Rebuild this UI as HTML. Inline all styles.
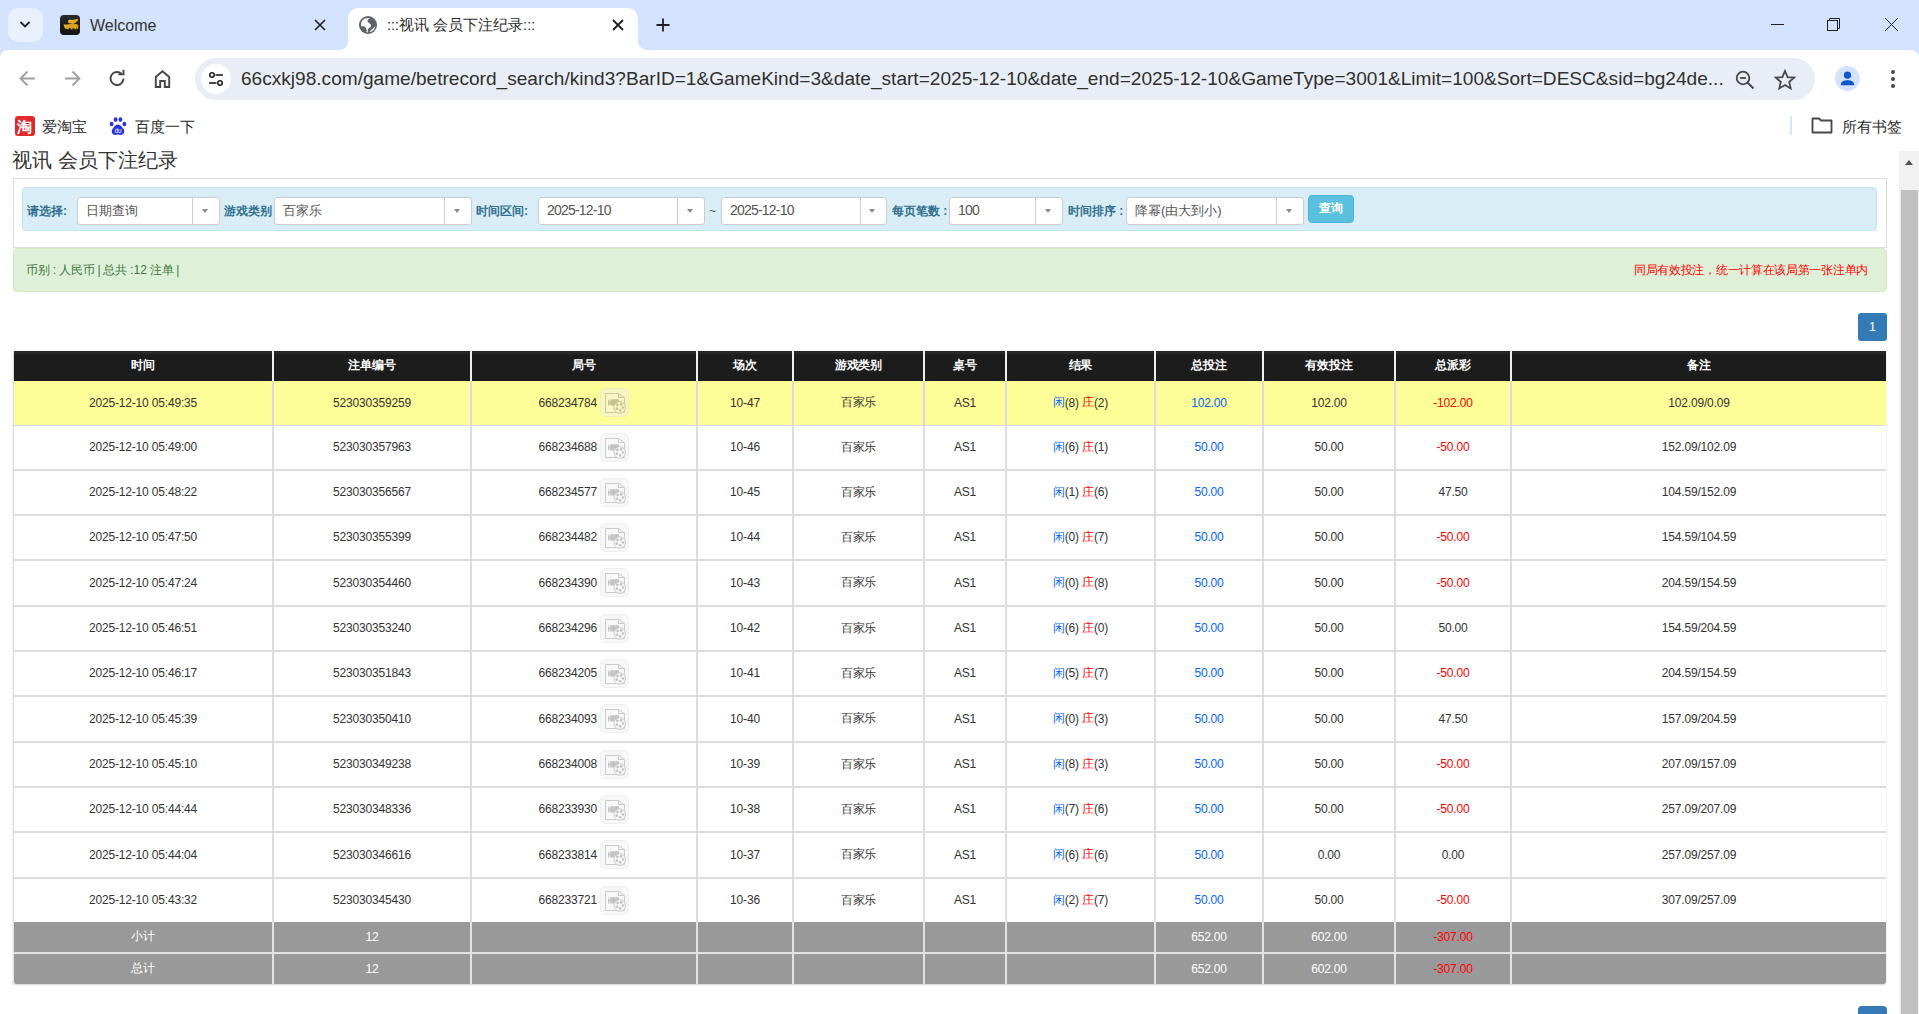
<!DOCTYPE html><html><head><meta charset="utf-8"><style>
*{margin:0;padding:0;box-sizing:border-box}
html,body{width:1919px;height:1014px;overflow:hidden;background:#fff;font-family:"Liberation Sans", sans-serif;}
.a{position:absolute}
.t{position:absolute;white-space:nowrap}
.cell{position:absolute;text-align:center;white-space:nowrap;font-size:12px;color:#333;display:flex;align-items:center;justify-content:center;letter-spacing:-0.17px;padding-bottom:1px}
.sel{position:absolute;background:#fff;border:1px solid #ccc;border-radius:3px;height:28px;top:197px}
.sel .v{position:absolute;left:8px;top:0;line-height:26px;font-size:13px;color:#555}
.dg{font-size:14px;letter-spacing:-0.8px;position:relative;top:-1px}
.sel .d{position:absolute;top:0;bottom:0;width:1px;background:#ccc}
.sel .ar{position:absolute;top:11px;width:0;height:0;border-left:3.5px solid transparent;border-right:3.5px solid transparent;border-top:4px solid #888}
.lbl{position:absolute;top:197px;line-height:28px;font-size:12px;font-weight:bold;color:#31708f}
</style></head><body>
<div class="a" style="left:0;top:0;width:1919px;height:62px;background:#d3e3fd"></div>
<div class="a" style="left:8px;top:8px;width:35px;height:34px;border-radius:10px;background:#e9f0fd"></div>
<svg class="a" style="left:17px;top:16px" width="16" height="16" viewBox="0 0 16 16"><path d="M3.5 6 L8 10.5 L12.5 6" fill="none" stroke="#1f1f1f" stroke-width="1.8"/></svg>
<div class="a" style="left:60px;top:15px;width:20px;height:20px;border-radius:4px;background:linear-gradient(#2a2a2a,#111)"></div>
<svg class="a" style="left:60px;top:15px" width="20" height="20" viewBox="0 0 20 20"><path d="M9 5.5 L18.5 3.8 C17.5 6.5 15.5 8.5 12 9 Z" fill="#e8a820"/><circle cx="10" cy="6.5" r="2" fill="#e6b030"/><ellipse cx="13" cy="11" rx="5.5" ry="2.6" fill="#d9a020"/><path d="M3.5 9.5 L9.5 9.5 L8.5 13.5 L5 13.8 Z" fill="#e8b030"/><rect x="7" y="11" width="2" height="3.2" fill="#d9a020"/><rect x="10.5" y="11.5" width="2" height="2.8" fill="#d9a020"/><rect x="14.5" y="11.5" width="2" height="2.8" fill="#d9a020"/><rect x="17" y="10" width="1.2" height="4" fill="#c89018"/></svg>
<div class="t" style="left:90px;top:16px;font-size:16px;line-height:20px;color:#333">Welcome</div>
<svg class="a" style="left:314px;top:19px" width="12" height="12" viewBox="0 0 12 12"><path d="M1 1 L11 11 M11 1 L1 11" stroke="#1f1f1f" stroke-width="1.6"/></svg>
<div class="a" style="left:348px;top:8px;width:290px;height:50px;background:#fff;border-radius:10px 10px 0 0"></div>
<div class="a" style="left:338px;top:40px;width:10px;height:10px;background:radial-gradient(circle at 0 0, #d3e3fd 10px, #fff 10.5px)"></div>
<div class="a" style="left:638px;top:40px;width:10px;height:10px;background:radial-gradient(circle at 100% 0, #d3e3fd 10px, #fff 10.5px)"></div>
<svg class="a" style="left:359px;top:16px" width="18" height="18" viewBox="0 0 18 18"><circle cx="9" cy="9" r="9" fill="#5f6368"/><path d="M2.2 7 C2.8 4 5.5 2 8.8 1.9 C9.6 1.9 10.4 2 11.2 2.2 C9.4 2.8 8.3 4 8.6 5.4 C9 7 11.6 7.2 12 9 C12.4 10.6 11 11.4 9.8 12.3 C8.8 13 8.4 14.5 9 16.3 C8.5 16.4 8 16.3 7.5 16.2 C8 14.3 7.4 12 5.6 10.8 C4.4 10 3 10.2 2.2 10.2 C2 9.2 2 8 2.2 7 Z" fill="#fff"/><path d="M16.2 10.5 C15.8 13.5 13.5 15.8 10.5 16.3 C11 15 12.5 14 13.8 12.8 C14.8 11.9 15.3 10.8 16.2 10.5 Z" fill="#fff"/></svg>
<div class="t" style="left:387px;top:15px;font-size:14.5px;line-height:20px;color:#2b2b2b">:::视讯 会员下注纪录:::</div>
<svg class="a" style="left:612px;top:19px" width="12" height="12" viewBox="0 0 12 12"><path d="M1 1 L11 11 M11 1 L1 11" stroke="#1f1f1f" stroke-width="1.8"/></svg>
<svg class="a" style="left:656px;top:18px" width="14" height="14" viewBox="0 0 14 14"><path d="M7 0.5 V13.5 M0.5 7 H13.5" stroke="#1f1f1f" stroke-width="1.8"/></svg>
<div class="a" style="left:1771px;top:24px;width:13px;height:1px;background:#1f1f1f"></div>
<svg class="a" style="left:1826px;top:17px" width="16" height="16" viewBox="0 0 16 16"><rect x="1.5" y="3.5" width="10" height="10" fill="none" stroke="#1f1f1f" stroke-width="1"/><path d="M3.5 3.5 V1.5 H13.5 V11.5 H11.5" fill="none" stroke="#1f1f1f" stroke-width="1"/></svg>
<svg class="a" style="left:1884px;top:17px" width="15" height="15" viewBox="0 0 15 15"><path d="M1 1 L14 14 M14 1 L1 14" stroke="#1f1f1f" stroke-width="1"/></svg>
<div class="a" style="left:0;top:50px;width:1919px;height:101px;background:#fff;border-radius:8px 8px 0 0"></div>
<div class="a" style="left:348px;top:44px;width:290px;height:10px;background:#fff"></div>
<svg class="a" style="left:18px;top:69px" width="19" height="19" viewBox="0 0 19 19"><path d="M17 9.5 H3 M9.5 2.5 L2.5 9.5 L9.5 16.5" fill="none" stroke="#a0a0a0" stroke-width="1.8"/></svg>
<svg class="a" style="left:63px;top:69px" width="19" height="19" viewBox="0 0 19 19"><path d="M2 9.5 H16 M9.5 2.5 L16.5 9.5 L9.5 16.5" fill="none" stroke="#a0a0a0" stroke-width="1.8"/></svg>
<svg class="a" style="left:108px;top:69px" width="19" height="19" viewBox="0 0 19 19"><path d="M15.5 9.5 A6.5 6.5 0 1 1 13.6 4.9" fill="none" stroke="#474747" stroke-width="1.9"/><path d="M10.5 5.2 H15.5 V0.8" fill="none" stroke="#474747" stroke-width="1.9"/></svg>
<svg class="a" style="left:153px;top:69px" width="19" height="20" viewBox="0 0 19 20"><path d="M2.8 18 V8 L9.5 2.2 L16.2 8 V18 H11.8 V12 H7.2 V18 Z" fill="none" stroke="#474747" stroke-width="1.9" stroke-linejoin="miter"/></svg>
<div class="a" style="left:195px;top:58px;width:1620px;height:42px;border-radius:21px;background:#e9eef6"></div>
<div class="a" style="left:201px;top:64px;width:30px;height:30px;border-radius:15px;background:#fff"></div>
<svg class="a" style="left:208px;top:71px" width="16" height="16" viewBox="0 0 16 16"><circle cx="4" cy="4" r="2.2" fill="none" stroke="#1f1f1f" stroke-width="1.6"/><path d="M7.5 4 H15" stroke="#1f1f1f" stroke-width="1.6"/><circle cx="12" cy="12" r="2.2" fill="none" stroke="#1f1f1f" stroke-width="1.6"/><path d="M1 12 H8.5" stroke="#1f1f1f" stroke-width="1.6"/></svg>
<div class="t" id="url" style="left:241px;top:67px;font-size:19.09px;line-height:24px;color:#303030">66cxkj98.com/game/betrecord_search/kind3?BarID=1&amp;GameKind=3&amp;date_start=2025-12-10&amp;date_end=2025-12-10&amp;GameType=3001&amp;Limit=100&amp;Sort=DESC&amp;sid=bg24de...</div>
<svg class="a" style="left:1735px;top:70px" width="20" height="20" viewBox="0 0 20 20"><circle cx="8" cy="8" r="6.3" fill="none" stroke="#474747" stroke-width="1.8"/><path d="M5 8 H11" stroke="#474747" stroke-width="1.8"/><path d="M12.5 12.5 L18.5 18.5" stroke="#474747" stroke-width="1.9"/></svg>
<svg class="a" style="left:1774px;top:69px" width="22" height="21" viewBox="0 0 22 21"><path d="M11 2 L13.6 8.1 L20.2 8.6 L15.2 12.9 L16.7 19.4 L11 16 L5.3 19.4 L6.8 12.9 L1.8 8.6 L8.4 8.1 Z" fill="none" stroke="#474747" stroke-width="1.8" stroke-linejoin="miter"/></svg>
<div class="a" style="left:1835px;top:66px;width:25px;height:25px;border-radius:50%;background:#d3e3fd"></div>
<svg class="a" style="left:1835px;top:66px" width="25" height="25" viewBox="0 0 25 25"><circle cx="12.5" cy="9.2" r="3.6" fill="#0b57d0"/><path d="M5.8 19.2 C5.8 15.5 9 14.3 12.5 14.3 C16 14.3 19.2 15.5 19.2 19.2 Z" fill="#0b57d0"/></svg>
<div class="a" style="left:1890.6px;top:70px;width:4px;height:4px;border-radius:50%;background:#474747"></div>
<div class="a" style="left:1890.6px;top:77px;width:4px;height:4px;border-radius:50%;background:#474747"></div>
<div class="a" style="left:1890.6px;top:84px;width:4px;height:4px;border-radius:50%;background:#474747"></div>
<div class="a" style="left:15px;top:116px;width:20px;height:20px;border-radius:3px;background:#e02a2a"></div>
<div class="t" style="left:15px;top:117px;width:18px;text-align:center;font-size:15px;line-height:20px;color:#fff;font-weight:bold">淘</div>
<div class="t" style="left:42px;top:117px;font-size:14.5px;line-height:20px;color:#2a2a2a">爱淘宝</div>
<svg class="a" style="left:109px;top:116px" width="18" height="20" viewBox="0 0 18 20"><ellipse cx="2.6" cy="8" rx="1.9" ry="2.3" fill="#2932e1"/><ellipse cx="6.6" cy="3.6" rx="1.9" ry="2.4" fill="#2932e1"/><ellipse cx="11.4" cy="3.6" rx="1.9" ry="2.4" fill="#2932e1"/><ellipse cx="15.4" cy="8" rx="1.9" ry="2.3" fill="#2932e1"/><path d="M9 8.5 C11.5 8.5 13.5 11.5 14.8 13.5 C16.3 16.5 14 19.5 10.5 18.8 L9 18.6 L7.5 18.8 C4 19.5 1.7 16.5 3.2 13.5 C4.5 11.5 6.5 8.5 9 8.5Z" fill="#2932e1"/><text x="9" y="17.3" font-size="6.5" fill="#fff" text-anchor="middle" font-family="Liberation Sans">du</text></svg>
<div class="t" style="left:135px;top:117px;font-size:14.5px;line-height:20px;color:#2a2a2a">百度一下</div>
<div class="a" style="left:1790px;top:116px;width:2px;height:19px;background:#d3e3fd;border-radius:1px"></div>
<svg class="a" style="left:1811px;top:117px" width="22" height="17" viewBox="0 0 22 17"><path d="M1.5 1.5 H8 L10 3.5 H20.5 V15.5 H1.5 Z" fill="none" stroke="#474747" stroke-width="1.8" stroke-linejoin="round"/></svg>
<div class="t" style="left:1842px;top:117px;font-size:14.5px;line-height:20px;color:#2a2a2a">所有书签</div>
<div class="t" style="left:12px;top:147px;font-size:20px;line-height:26px;color:#333">视讯 会员下注纪录</div>
<div class="a" style="left:13px;top:178px;width:1874px;height:70px;border:1px solid #ddd;background:#fff"></div>
<div class="a" style="left:22px;top:187px;width:1855px;height:44px;border:1px solid #bce8f1;border-radius:4px;background:#d9edf7"></div>
<div class="lbl" style="left:27px">请选择:</div>
<div class="sel" style="left:77px;width:143px"><div class="v">日期查询</div><div class="d" style="left:114px"></div><div class="ar" style="left:124px"></div></div>
<div class="lbl" style="left:224px">游戏类别</div>
<div class="sel" style="left:274px;width:198px"><div class="v">百家乐</div><div class="d" style="left:169px"></div><div class="ar" style="left:179px"></div></div>
<div class="lbl" style="left:476px">时间区间:</div>
<div class="sel" style="left:538px;width:167px"><div class="v"><span class="dg">2025-12-10</span></div><div class="d" style="left:138px"></div><div class="ar" style="left:148px"></div></div>
<div class="t" style="left:709px;top:197px;line-height:28px;font-size:12px;color:#555">~</div>
<div class="sel" style="left:721px;width:166px"><div class="v"><span class="dg">2025-12-10</span></div><div class="d" style="left:138px"></div><div class="ar" style="left:147px"></div></div>
<div class="lbl" style="left:892px">每页笔数 :</div>
<div class="sel" style="left:949px;width:114px"><div class="v"><span class="dg">100</span></div><div class="d" style="left:85px"></div><div class="ar" style="left:95px"></div></div>
<div class="lbl" style="left:1068px">时间排序 :</div>
<div class="sel" style="left:1126px;width:178px"><div class="v">降幂(由大到小)</div><div class="d" style="left:149px"></div><div class="ar" style="left:159px"></div></div>
<div class="a" style="left:1308px;top:195px;width:46px;height:28px;border-radius:4px;background:#5bc0de;border:1px solid #46b8da"></div>
<div class="t" style="left:1308px;top:195px;width:46px;text-align:center;line-height:27px;font-size:12px;color:#fff;font-weight:bold">查询</div>
<div class="a" style="left:13px;top:248px;width:1874px;height:44px;border:1px solid #d6e9c6;border-radius:4px;background:#dff0d8"></div>
<div class="t" style="left:26px;top:258px;line-height:24px;font-size:12px;color:#3c763d;word-spacing:-0.6px">币别 : 人民币 | 总共 :12 注单 |</div>
<div class="t" style="right:51px;top:258px;line-height:24px;font-size:12px;color:#ff0000;letter-spacing:-0.3px">同局有效投注，统一计算在该局第一张注单内</div>
<div class="a" style="left:1858px;top:313px;width:29px;height:28px;border-radius:3px;background:#337ab7"></div>
<div class="t" style="left:1858px;top:313px;width:29px;text-align:center;line-height:28px;font-size:12.5px;color:#fff">1</div>
<div class="a" style="left:1858px;top:1006px;width:29px;height:28px;border-radius:4px;background:#337ab7"></div>
<div class="a" style="left:13px;top:351px;width:1873px;height:633px;background:#ddd;border-radius:0 0 3px 3px;box-shadow:0 1px 2px rgba(0,0,0,0.18)"></div>
<div class="a" style="left:14px;top:351px;width:1872px;height:30px;background:#efefef"></div>
<div class="cell" style="left:14px;top:351px;width:258px;height:30px;background:linear-gradient(#1c1c1c 0px,#2b2b2b 1.5px,#1c1c1c 4px,#1c1c1c 100%);color:#fff;font-weight:bold">时间</div>
<div class="cell" style="left:274px;top:351px;width:196px;height:30px;background:linear-gradient(#1c1c1c 0px,#2b2b2b 1.5px,#1c1c1c 4px,#1c1c1c 100%);color:#fff;font-weight:bold">注单编号</div>
<div class="cell" style="left:472px;top:351px;width:224px;height:30px;background:linear-gradient(#1c1c1c 0px,#2b2b2b 1.5px,#1c1c1c 4px,#1c1c1c 100%);color:#fff;font-weight:bold">局号</div>
<div class="cell" style="left:698px;top:351px;width:94px;height:30px;background:linear-gradient(#1c1c1c 0px,#2b2b2b 1.5px,#1c1c1c 4px,#1c1c1c 100%);color:#fff;font-weight:bold">场次</div>
<div class="cell" style="left:794px;top:351px;width:129px;height:30px;background:linear-gradient(#1c1c1c 0px,#2b2b2b 1.5px,#1c1c1c 4px,#1c1c1c 100%);color:#fff;font-weight:bold">游戏类别</div>
<div class="cell" style="left:925px;top:351px;width:80px;height:30px;background:linear-gradient(#1c1c1c 0px,#2b2b2b 1.5px,#1c1c1c 4px,#1c1c1c 100%);color:#fff;font-weight:bold">桌号</div>
<div class="cell" style="left:1007px;top:351px;width:147px;height:30px;background:linear-gradient(#1c1c1c 0px,#2b2b2b 1.5px,#1c1c1c 4px,#1c1c1c 100%);color:#fff;font-weight:bold">结果</div>
<div class="cell" style="left:1156px;top:351px;width:106px;height:30px;background:linear-gradient(#1c1c1c 0px,#2b2b2b 1.5px,#1c1c1c 4px,#1c1c1c 100%);color:#fff;font-weight:bold">总投注</div>
<div class="cell" style="left:1264px;top:351px;width:130px;height:30px;background:linear-gradient(#1c1c1c 0px,#2b2b2b 1.5px,#1c1c1c 4px,#1c1c1c 100%);color:#fff;font-weight:bold">有效投注</div>
<div class="cell" style="left:1396px;top:351px;width:114px;height:30px;background:linear-gradient(#1c1c1c 0px,#2b2b2b 1.5px,#1c1c1c 4px,#1c1c1c 100%);color:#fff;font-weight:bold">总派彩</div>
<div class="cell" style="left:1512px;top:351px;width:374px;height:30px;background:linear-gradient(#1c1c1c 0px,#2b2b2b 1.5px,#1c1c1c 4px,#1c1c1c 100%);color:#fff;font-weight:bold">备注</div>
<div class="a" style="left:13px;top:381px;width:1873px;height:45px;background:#dadae2"></div>
<div class="cell" style="left:14px;top:381px;width:258px;height:44px;background:#fefe98">2025-12-10 05:49:35</div>
<div class="cell" style="left:274px;top:381px;width:196px;height:44px;background:#fefe98">523030359259</div>
<div class="cell" style="left:472px;top:381px;width:224px;height:44px;background:#fefe98"></div>
<div class="cell" style="left:698px;top:381px;width:94px;height:44px;background:#fefe98">10-47</div>
<div class="cell" style="left:794px;top:381px;width:129px;height:44px;background:#fefe98">百家乐</div>
<div class="cell" style="left:925px;top:381px;width:80px;height:44px;background:#fefe98">AS1</div>
<div class="cell" style="left:1007px;top:381px;width:147px;height:44px;background:#fefe98"><span style="color:#0066ff">闲</span>(8)&nbsp;<span style="color:#ff0000">庄</span>(2)</div>
<div class="cell" style="left:1156px;top:381px;width:106px;height:44px;background:#fefe98"><span style="color:#0066ff">102.00</span></div>
<div class="cell" style="left:1264px;top:381px;width:130px;height:44px;background:#fefe98">102.00</div>
<div class="cell" style="left:1396px;top:381px;width:114px;height:44px;background:#fefe98"><span style="color:#ff0000">-102.00</span></div>
<div class="cell" style="left:1512px;top:381px;width:374px;height:44px;background:#fefe98">102.09/0.09</div>
<div class="cell" style="left:472px;top:381px;width:125px;height:44px;justify-content:flex-end">668234784</div>
<div class="a" style="left:600px;top:388px;width:29px;height:29px"><svg width="29" height="29" viewBox="0 0 29 29" style="opacity:.5"><rect x="0.5" y="0.5" width="28" height="28" rx="5" fill="#f0f0f0" stroke="#dedede"/><path d="M5.5 5.5 H18.5 L24.5 9.8 V24.5 H5.5 Z" fill="#f2f2f2" stroke="#999" stroke-width="1"/><path d="M18.5 5.5 V9.5 H24.5" fill="none" stroke="#999" stroke-width="1"/><path d="M8 11.8 L9.2 12 L9.2 13.8 L10.2 13.8 L10.2 11.3 L19 11.3 L19 17.5 L10.2 17.5 L10.2 15.6 L9.2 15.6 L9.2 17.4 L8 17.6 Z" fill="#8a8a8a"/><circle cx="19.8" cy="19.5" r="5.8" fill="#f2f2f2" stroke="#999" stroke-width="1"/><circle cx="17.4" cy="16.9" r="1.35" fill="#8a8a8a"/><circle cx="21.2" cy="16.4" r="1.35" fill="#8a8a8a"/><circle cx="23.1" cy="19.5" r="1.35" fill="#8a8a8a"/><circle cx="20.2" cy="22.3" r="1.35" fill="#8a8a8a"/><circle cx="16.9" cy="20.7" r="1.35" fill="#8a8a8a"/></svg></div>
<div class="cell" style="left:14px;top:426px;width:258px;height:43px;background:#fff">2025-12-10 05:49:00</div>
<div class="cell" style="left:274px;top:426px;width:196px;height:43px;background:#fff">523030357963</div>
<div class="cell" style="left:472px;top:426px;width:224px;height:43px;background:#fff"></div>
<div class="cell" style="left:698px;top:426px;width:94px;height:43px;background:#fff">10-46</div>
<div class="cell" style="left:794px;top:426px;width:129px;height:43px;background:#fff">百家乐</div>
<div class="cell" style="left:925px;top:426px;width:80px;height:43px;background:#fff">AS1</div>
<div class="cell" style="left:1007px;top:426px;width:147px;height:43px;background:#fff"><span style="color:#0066ff">闲</span>(6)&nbsp;<span style="color:#ff0000">庄</span>(1)</div>
<div class="cell" style="left:1156px;top:426px;width:106px;height:43px;background:#fff"><span style="color:#0066ff">50.00</span></div>
<div class="cell" style="left:1264px;top:426px;width:130px;height:43px;background:#fff">50.00</div>
<div class="cell" style="left:1396px;top:426px;width:114px;height:43px;background:#fff"><span style="color:#ff0000">-50.00</span></div>
<div class="cell" style="left:1512px;top:426px;width:374px;height:43px;background:#fff">152.09/102.09</div>
<div class="cell" style="left:472px;top:426px;width:125px;height:43px;justify-content:flex-end">668234688</div>
<div class="a" style="left:600px;top:433px;width:29px;height:29px"><svg width="29" height="29" viewBox="0 0 29 29" style="opacity:.5"><rect x="0.5" y="0.5" width="28" height="28" rx="5" fill="#f0f0f0" stroke="#dedede"/><path d="M5.5 5.5 H18.5 L24.5 9.8 V24.5 H5.5 Z" fill="#f2f2f2" stroke="#999" stroke-width="1"/><path d="M18.5 5.5 V9.5 H24.5" fill="none" stroke="#999" stroke-width="1"/><path d="M8 11.8 L9.2 12 L9.2 13.8 L10.2 13.8 L10.2 11.3 L19 11.3 L19 17.5 L10.2 17.5 L10.2 15.6 L9.2 15.6 L9.2 17.4 L8 17.6 Z" fill="#8a8a8a"/><circle cx="19.8" cy="19.5" r="5.8" fill="#f2f2f2" stroke="#999" stroke-width="1"/><circle cx="17.4" cy="16.9" r="1.35" fill="#8a8a8a"/><circle cx="21.2" cy="16.4" r="1.35" fill="#8a8a8a"/><circle cx="23.1" cy="19.5" r="1.35" fill="#8a8a8a"/><circle cx="20.2" cy="22.3" r="1.35" fill="#8a8a8a"/><circle cx="16.9" cy="20.7" r="1.35" fill="#8a8a8a"/></svg></div>
<div class="cell" style="left:14px;top:471px;width:258px;height:43px;background:#fff">2025-12-10 05:48:22</div>
<div class="cell" style="left:274px;top:471px;width:196px;height:43px;background:#fff">523030356567</div>
<div class="cell" style="left:472px;top:471px;width:224px;height:43px;background:#fff"></div>
<div class="cell" style="left:698px;top:471px;width:94px;height:43px;background:#fff">10-45</div>
<div class="cell" style="left:794px;top:471px;width:129px;height:43px;background:#fff">百家乐</div>
<div class="cell" style="left:925px;top:471px;width:80px;height:43px;background:#fff">AS1</div>
<div class="cell" style="left:1007px;top:471px;width:147px;height:43px;background:#fff"><span style="color:#0066ff">闲</span>(1)&nbsp;<span style="color:#ff0000">庄</span>(6)</div>
<div class="cell" style="left:1156px;top:471px;width:106px;height:43px;background:#fff"><span style="color:#0066ff">50.00</span></div>
<div class="cell" style="left:1264px;top:471px;width:130px;height:43px;background:#fff">50.00</div>
<div class="cell" style="left:1396px;top:471px;width:114px;height:43px;background:#fff">47.50</div>
<div class="cell" style="left:1512px;top:471px;width:374px;height:43px;background:#fff">104.59/152.09</div>
<div class="cell" style="left:472px;top:471px;width:125px;height:43px;justify-content:flex-end">668234577</div>
<div class="a" style="left:600px;top:478px;width:29px;height:29px"><svg width="29" height="29" viewBox="0 0 29 29" style="opacity:.5"><rect x="0.5" y="0.5" width="28" height="28" rx="5" fill="#f0f0f0" stroke="#dedede"/><path d="M5.5 5.5 H18.5 L24.5 9.8 V24.5 H5.5 Z" fill="#f2f2f2" stroke="#999" stroke-width="1"/><path d="M18.5 5.5 V9.5 H24.5" fill="none" stroke="#999" stroke-width="1"/><path d="M8 11.8 L9.2 12 L9.2 13.8 L10.2 13.8 L10.2 11.3 L19 11.3 L19 17.5 L10.2 17.5 L10.2 15.6 L9.2 15.6 L9.2 17.4 L8 17.6 Z" fill="#8a8a8a"/><circle cx="19.8" cy="19.5" r="5.8" fill="#f2f2f2" stroke="#999" stroke-width="1"/><circle cx="17.4" cy="16.9" r="1.35" fill="#8a8a8a"/><circle cx="21.2" cy="16.4" r="1.35" fill="#8a8a8a"/><circle cx="23.1" cy="19.5" r="1.35" fill="#8a8a8a"/><circle cx="20.2" cy="22.3" r="1.35" fill="#8a8a8a"/><circle cx="16.9" cy="20.7" r="1.35" fill="#8a8a8a"/></svg></div>
<div class="cell" style="left:14px;top:516px;width:258px;height:43px;background:#fff">2025-12-10 05:47:50</div>
<div class="cell" style="left:274px;top:516px;width:196px;height:43px;background:#fff">523030355399</div>
<div class="cell" style="left:472px;top:516px;width:224px;height:43px;background:#fff"></div>
<div class="cell" style="left:698px;top:516px;width:94px;height:43px;background:#fff">10-44</div>
<div class="cell" style="left:794px;top:516px;width:129px;height:43px;background:#fff">百家乐</div>
<div class="cell" style="left:925px;top:516px;width:80px;height:43px;background:#fff">AS1</div>
<div class="cell" style="left:1007px;top:516px;width:147px;height:43px;background:#fff"><span style="color:#0066ff">闲</span>(0)&nbsp;<span style="color:#ff0000">庄</span>(7)</div>
<div class="cell" style="left:1156px;top:516px;width:106px;height:43px;background:#fff"><span style="color:#0066ff">50.00</span></div>
<div class="cell" style="left:1264px;top:516px;width:130px;height:43px;background:#fff">50.00</div>
<div class="cell" style="left:1396px;top:516px;width:114px;height:43px;background:#fff"><span style="color:#ff0000">-50.00</span></div>
<div class="cell" style="left:1512px;top:516px;width:374px;height:43px;background:#fff">154.59/104.59</div>
<div class="cell" style="left:472px;top:516px;width:125px;height:43px;justify-content:flex-end">668234482</div>
<div class="a" style="left:600px;top:523px;width:29px;height:29px"><svg width="29" height="29" viewBox="0 0 29 29" style="opacity:.5"><rect x="0.5" y="0.5" width="28" height="28" rx="5" fill="#f0f0f0" stroke="#dedede"/><path d="M5.5 5.5 H18.5 L24.5 9.8 V24.5 H5.5 Z" fill="#f2f2f2" stroke="#999" stroke-width="1"/><path d="M18.5 5.5 V9.5 H24.5" fill="none" stroke="#999" stroke-width="1"/><path d="M8 11.8 L9.2 12 L9.2 13.8 L10.2 13.8 L10.2 11.3 L19 11.3 L19 17.5 L10.2 17.5 L10.2 15.6 L9.2 15.6 L9.2 17.4 L8 17.6 Z" fill="#8a8a8a"/><circle cx="19.8" cy="19.5" r="5.8" fill="#f2f2f2" stroke="#999" stroke-width="1"/><circle cx="17.4" cy="16.9" r="1.35" fill="#8a8a8a"/><circle cx="21.2" cy="16.4" r="1.35" fill="#8a8a8a"/><circle cx="23.1" cy="19.5" r="1.35" fill="#8a8a8a"/><circle cx="20.2" cy="22.3" r="1.35" fill="#8a8a8a"/><circle cx="16.9" cy="20.7" r="1.35" fill="#8a8a8a"/></svg></div>
<div class="cell" style="left:14px;top:561px;width:258px;height:44px;background:#fff">2025-12-10 05:47:24</div>
<div class="cell" style="left:274px;top:561px;width:196px;height:44px;background:#fff">523030354460</div>
<div class="cell" style="left:472px;top:561px;width:224px;height:44px;background:#fff"></div>
<div class="cell" style="left:698px;top:561px;width:94px;height:44px;background:#fff">10-43</div>
<div class="cell" style="left:794px;top:561px;width:129px;height:44px;background:#fff">百家乐</div>
<div class="cell" style="left:925px;top:561px;width:80px;height:44px;background:#fff">AS1</div>
<div class="cell" style="left:1007px;top:561px;width:147px;height:44px;background:#fff"><span style="color:#0066ff">闲</span>(0)&nbsp;<span style="color:#ff0000">庄</span>(8)</div>
<div class="cell" style="left:1156px;top:561px;width:106px;height:44px;background:#fff"><span style="color:#0066ff">50.00</span></div>
<div class="cell" style="left:1264px;top:561px;width:130px;height:44px;background:#fff">50.00</div>
<div class="cell" style="left:1396px;top:561px;width:114px;height:44px;background:#fff"><span style="color:#ff0000">-50.00</span></div>
<div class="cell" style="left:1512px;top:561px;width:374px;height:44px;background:#fff">204.59/154.59</div>
<div class="cell" style="left:472px;top:561px;width:125px;height:44px;justify-content:flex-end">668234390</div>
<div class="a" style="left:600px;top:568px;width:29px;height:29px"><svg width="29" height="29" viewBox="0 0 29 29" style="opacity:.5"><rect x="0.5" y="0.5" width="28" height="28" rx="5" fill="#f0f0f0" stroke="#dedede"/><path d="M5.5 5.5 H18.5 L24.5 9.8 V24.5 H5.5 Z" fill="#f2f2f2" stroke="#999" stroke-width="1"/><path d="M18.5 5.5 V9.5 H24.5" fill="none" stroke="#999" stroke-width="1"/><path d="M8 11.8 L9.2 12 L9.2 13.8 L10.2 13.8 L10.2 11.3 L19 11.3 L19 17.5 L10.2 17.5 L10.2 15.6 L9.2 15.6 L9.2 17.4 L8 17.6 Z" fill="#8a8a8a"/><circle cx="19.8" cy="19.5" r="5.8" fill="#f2f2f2" stroke="#999" stroke-width="1"/><circle cx="17.4" cy="16.9" r="1.35" fill="#8a8a8a"/><circle cx="21.2" cy="16.4" r="1.35" fill="#8a8a8a"/><circle cx="23.1" cy="19.5" r="1.35" fill="#8a8a8a"/><circle cx="20.2" cy="22.3" r="1.35" fill="#8a8a8a"/><circle cx="16.9" cy="20.7" r="1.35" fill="#8a8a8a"/></svg></div>
<div class="cell" style="left:14px;top:607px;width:258px;height:43px;background:#fff">2025-12-10 05:46:51</div>
<div class="cell" style="left:274px;top:607px;width:196px;height:43px;background:#fff">523030353240</div>
<div class="cell" style="left:472px;top:607px;width:224px;height:43px;background:#fff"></div>
<div class="cell" style="left:698px;top:607px;width:94px;height:43px;background:#fff">10-42</div>
<div class="cell" style="left:794px;top:607px;width:129px;height:43px;background:#fff">百家乐</div>
<div class="cell" style="left:925px;top:607px;width:80px;height:43px;background:#fff">AS1</div>
<div class="cell" style="left:1007px;top:607px;width:147px;height:43px;background:#fff"><span style="color:#0066ff">闲</span>(6)&nbsp;<span style="color:#ff0000">庄</span>(0)</div>
<div class="cell" style="left:1156px;top:607px;width:106px;height:43px;background:#fff"><span style="color:#0066ff">50.00</span></div>
<div class="cell" style="left:1264px;top:607px;width:130px;height:43px;background:#fff">50.00</div>
<div class="cell" style="left:1396px;top:607px;width:114px;height:43px;background:#fff">50.00</div>
<div class="cell" style="left:1512px;top:607px;width:374px;height:43px;background:#fff">154.59/204.59</div>
<div class="cell" style="left:472px;top:607px;width:125px;height:43px;justify-content:flex-end">668234296</div>
<div class="a" style="left:600px;top:614px;width:29px;height:29px"><svg width="29" height="29" viewBox="0 0 29 29" style="opacity:.5"><rect x="0.5" y="0.5" width="28" height="28" rx="5" fill="#f0f0f0" stroke="#dedede"/><path d="M5.5 5.5 H18.5 L24.5 9.8 V24.5 H5.5 Z" fill="#f2f2f2" stroke="#999" stroke-width="1"/><path d="M18.5 5.5 V9.5 H24.5" fill="none" stroke="#999" stroke-width="1"/><path d="M8 11.8 L9.2 12 L9.2 13.8 L10.2 13.8 L10.2 11.3 L19 11.3 L19 17.5 L10.2 17.5 L10.2 15.6 L9.2 15.6 L9.2 17.4 L8 17.6 Z" fill="#8a8a8a"/><circle cx="19.8" cy="19.5" r="5.8" fill="#f2f2f2" stroke="#999" stroke-width="1"/><circle cx="17.4" cy="16.9" r="1.35" fill="#8a8a8a"/><circle cx="21.2" cy="16.4" r="1.35" fill="#8a8a8a"/><circle cx="23.1" cy="19.5" r="1.35" fill="#8a8a8a"/><circle cx="20.2" cy="22.3" r="1.35" fill="#8a8a8a"/><circle cx="16.9" cy="20.7" r="1.35" fill="#8a8a8a"/></svg></div>
<div class="cell" style="left:14px;top:652px;width:258px;height:43px;background:#fff">2025-12-10 05:46:17</div>
<div class="cell" style="left:274px;top:652px;width:196px;height:43px;background:#fff">523030351843</div>
<div class="cell" style="left:472px;top:652px;width:224px;height:43px;background:#fff"></div>
<div class="cell" style="left:698px;top:652px;width:94px;height:43px;background:#fff">10-41</div>
<div class="cell" style="left:794px;top:652px;width:129px;height:43px;background:#fff">百家乐</div>
<div class="cell" style="left:925px;top:652px;width:80px;height:43px;background:#fff">AS1</div>
<div class="cell" style="left:1007px;top:652px;width:147px;height:43px;background:#fff"><span style="color:#0066ff">闲</span>(5)&nbsp;<span style="color:#ff0000">庄</span>(7)</div>
<div class="cell" style="left:1156px;top:652px;width:106px;height:43px;background:#fff"><span style="color:#0066ff">50.00</span></div>
<div class="cell" style="left:1264px;top:652px;width:130px;height:43px;background:#fff">50.00</div>
<div class="cell" style="left:1396px;top:652px;width:114px;height:43px;background:#fff"><span style="color:#ff0000">-50.00</span></div>
<div class="cell" style="left:1512px;top:652px;width:374px;height:43px;background:#fff">204.59/154.59</div>
<div class="cell" style="left:472px;top:652px;width:125px;height:43px;justify-content:flex-end">668234205</div>
<div class="a" style="left:600px;top:659px;width:29px;height:29px"><svg width="29" height="29" viewBox="0 0 29 29" style="opacity:.5"><rect x="0.5" y="0.5" width="28" height="28" rx="5" fill="#f0f0f0" stroke="#dedede"/><path d="M5.5 5.5 H18.5 L24.5 9.8 V24.5 H5.5 Z" fill="#f2f2f2" stroke="#999" stroke-width="1"/><path d="M18.5 5.5 V9.5 H24.5" fill="none" stroke="#999" stroke-width="1"/><path d="M8 11.8 L9.2 12 L9.2 13.8 L10.2 13.8 L10.2 11.3 L19 11.3 L19 17.5 L10.2 17.5 L10.2 15.6 L9.2 15.6 L9.2 17.4 L8 17.6 Z" fill="#8a8a8a"/><circle cx="19.8" cy="19.5" r="5.8" fill="#f2f2f2" stroke="#999" stroke-width="1"/><circle cx="17.4" cy="16.9" r="1.35" fill="#8a8a8a"/><circle cx="21.2" cy="16.4" r="1.35" fill="#8a8a8a"/><circle cx="23.1" cy="19.5" r="1.35" fill="#8a8a8a"/><circle cx="20.2" cy="22.3" r="1.35" fill="#8a8a8a"/><circle cx="16.9" cy="20.7" r="1.35" fill="#8a8a8a"/></svg></div>
<div class="cell" style="left:14px;top:697px;width:258px;height:44px;background:#fff">2025-12-10 05:45:39</div>
<div class="cell" style="left:274px;top:697px;width:196px;height:44px;background:#fff">523030350410</div>
<div class="cell" style="left:472px;top:697px;width:224px;height:44px;background:#fff"></div>
<div class="cell" style="left:698px;top:697px;width:94px;height:44px;background:#fff">10-40</div>
<div class="cell" style="left:794px;top:697px;width:129px;height:44px;background:#fff">百家乐</div>
<div class="cell" style="left:925px;top:697px;width:80px;height:44px;background:#fff">AS1</div>
<div class="cell" style="left:1007px;top:697px;width:147px;height:44px;background:#fff"><span style="color:#0066ff">闲</span>(0)&nbsp;<span style="color:#ff0000">庄</span>(3)</div>
<div class="cell" style="left:1156px;top:697px;width:106px;height:44px;background:#fff"><span style="color:#0066ff">50.00</span></div>
<div class="cell" style="left:1264px;top:697px;width:130px;height:44px;background:#fff">50.00</div>
<div class="cell" style="left:1396px;top:697px;width:114px;height:44px;background:#fff">47.50</div>
<div class="cell" style="left:1512px;top:697px;width:374px;height:44px;background:#fff">157.09/204.59</div>
<div class="cell" style="left:472px;top:697px;width:125px;height:44px;justify-content:flex-end">668234093</div>
<div class="a" style="left:600px;top:704px;width:29px;height:29px"><svg width="29" height="29" viewBox="0 0 29 29" style="opacity:.5"><rect x="0.5" y="0.5" width="28" height="28" rx="5" fill="#f0f0f0" stroke="#dedede"/><path d="M5.5 5.5 H18.5 L24.5 9.8 V24.5 H5.5 Z" fill="#f2f2f2" stroke="#999" stroke-width="1"/><path d="M18.5 5.5 V9.5 H24.5" fill="none" stroke="#999" stroke-width="1"/><path d="M8 11.8 L9.2 12 L9.2 13.8 L10.2 13.8 L10.2 11.3 L19 11.3 L19 17.5 L10.2 17.5 L10.2 15.6 L9.2 15.6 L9.2 17.4 L8 17.6 Z" fill="#8a8a8a"/><circle cx="19.8" cy="19.5" r="5.8" fill="#f2f2f2" stroke="#999" stroke-width="1"/><circle cx="17.4" cy="16.9" r="1.35" fill="#8a8a8a"/><circle cx="21.2" cy="16.4" r="1.35" fill="#8a8a8a"/><circle cx="23.1" cy="19.5" r="1.35" fill="#8a8a8a"/><circle cx="20.2" cy="22.3" r="1.35" fill="#8a8a8a"/><circle cx="16.9" cy="20.7" r="1.35" fill="#8a8a8a"/></svg></div>
<div class="cell" style="left:14px;top:743px;width:258px;height:43px;background:#fff">2025-12-10 05:45:10</div>
<div class="cell" style="left:274px;top:743px;width:196px;height:43px;background:#fff">523030349238</div>
<div class="cell" style="left:472px;top:743px;width:224px;height:43px;background:#fff"></div>
<div class="cell" style="left:698px;top:743px;width:94px;height:43px;background:#fff">10-39</div>
<div class="cell" style="left:794px;top:743px;width:129px;height:43px;background:#fff">百家乐</div>
<div class="cell" style="left:925px;top:743px;width:80px;height:43px;background:#fff">AS1</div>
<div class="cell" style="left:1007px;top:743px;width:147px;height:43px;background:#fff"><span style="color:#0066ff">闲</span>(8)&nbsp;<span style="color:#ff0000">庄</span>(3)</div>
<div class="cell" style="left:1156px;top:743px;width:106px;height:43px;background:#fff"><span style="color:#0066ff">50.00</span></div>
<div class="cell" style="left:1264px;top:743px;width:130px;height:43px;background:#fff">50.00</div>
<div class="cell" style="left:1396px;top:743px;width:114px;height:43px;background:#fff"><span style="color:#ff0000">-50.00</span></div>
<div class="cell" style="left:1512px;top:743px;width:374px;height:43px;background:#fff">207.09/157.09</div>
<div class="cell" style="left:472px;top:743px;width:125px;height:43px;justify-content:flex-end">668234008</div>
<div class="a" style="left:600px;top:750px;width:29px;height:29px"><svg width="29" height="29" viewBox="0 0 29 29" style="opacity:.5"><rect x="0.5" y="0.5" width="28" height="28" rx="5" fill="#f0f0f0" stroke="#dedede"/><path d="M5.5 5.5 H18.5 L24.5 9.8 V24.5 H5.5 Z" fill="#f2f2f2" stroke="#999" stroke-width="1"/><path d="M18.5 5.5 V9.5 H24.5" fill="none" stroke="#999" stroke-width="1"/><path d="M8 11.8 L9.2 12 L9.2 13.8 L10.2 13.8 L10.2 11.3 L19 11.3 L19 17.5 L10.2 17.5 L10.2 15.6 L9.2 15.6 L9.2 17.4 L8 17.6 Z" fill="#8a8a8a"/><circle cx="19.8" cy="19.5" r="5.8" fill="#f2f2f2" stroke="#999" stroke-width="1"/><circle cx="17.4" cy="16.9" r="1.35" fill="#8a8a8a"/><circle cx="21.2" cy="16.4" r="1.35" fill="#8a8a8a"/><circle cx="23.1" cy="19.5" r="1.35" fill="#8a8a8a"/><circle cx="20.2" cy="22.3" r="1.35" fill="#8a8a8a"/><circle cx="16.9" cy="20.7" r="1.35" fill="#8a8a8a"/></svg></div>
<div class="cell" style="left:14px;top:788px;width:258px;height:43px;background:#fff">2025-12-10 05:44:44</div>
<div class="cell" style="left:274px;top:788px;width:196px;height:43px;background:#fff">523030348336</div>
<div class="cell" style="left:472px;top:788px;width:224px;height:43px;background:#fff"></div>
<div class="cell" style="left:698px;top:788px;width:94px;height:43px;background:#fff">10-38</div>
<div class="cell" style="left:794px;top:788px;width:129px;height:43px;background:#fff">百家乐</div>
<div class="cell" style="left:925px;top:788px;width:80px;height:43px;background:#fff">AS1</div>
<div class="cell" style="left:1007px;top:788px;width:147px;height:43px;background:#fff"><span style="color:#0066ff">闲</span>(7)&nbsp;<span style="color:#ff0000">庄</span>(6)</div>
<div class="cell" style="left:1156px;top:788px;width:106px;height:43px;background:#fff"><span style="color:#0066ff">50.00</span></div>
<div class="cell" style="left:1264px;top:788px;width:130px;height:43px;background:#fff">50.00</div>
<div class="cell" style="left:1396px;top:788px;width:114px;height:43px;background:#fff"><span style="color:#ff0000">-50.00</span></div>
<div class="cell" style="left:1512px;top:788px;width:374px;height:43px;background:#fff">257.09/207.09</div>
<div class="cell" style="left:472px;top:788px;width:125px;height:43px;justify-content:flex-end">668233930</div>
<div class="a" style="left:600px;top:795px;width:29px;height:29px"><svg width="29" height="29" viewBox="0 0 29 29" style="opacity:.5"><rect x="0.5" y="0.5" width="28" height="28" rx="5" fill="#f0f0f0" stroke="#dedede"/><path d="M5.5 5.5 H18.5 L24.5 9.8 V24.5 H5.5 Z" fill="#f2f2f2" stroke="#999" stroke-width="1"/><path d="M18.5 5.5 V9.5 H24.5" fill="none" stroke="#999" stroke-width="1"/><path d="M8 11.8 L9.2 12 L9.2 13.8 L10.2 13.8 L10.2 11.3 L19 11.3 L19 17.5 L10.2 17.5 L10.2 15.6 L9.2 15.6 L9.2 17.4 L8 17.6 Z" fill="#8a8a8a"/><circle cx="19.8" cy="19.5" r="5.8" fill="#f2f2f2" stroke="#999" stroke-width="1"/><circle cx="17.4" cy="16.9" r="1.35" fill="#8a8a8a"/><circle cx="21.2" cy="16.4" r="1.35" fill="#8a8a8a"/><circle cx="23.1" cy="19.5" r="1.35" fill="#8a8a8a"/><circle cx="20.2" cy="22.3" r="1.35" fill="#8a8a8a"/><circle cx="16.9" cy="20.7" r="1.35" fill="#8a8a8a"/></svg></div>
<div class="cell" style="left:14px;top:833px;width:258px;height:44px;background:#fff">2025-12-10 05:44:04</div>
<div class="cell" style="left:274px;top:833px;width:196px;height:44px;background:#fff">523030346616</div>
<div class="cell" style="left:472px;top:833px;width:224px;height:44px;background:#fff"></div>
<div class="cell" style="left:698px;top:833px;width:94px;height:44px;background:#fff">10-37</div>
<div class="cell" style="left:794px;top:833px;width:129px;height:44px;background:#fff">百家乐</div>
<div class="cell" style="left:925px;top:833px;width:80px;height:44px;background:#fff">AS1</div>
<div class="cell" style="left:1007px;top:833px;width:147px;height:44px;background:#fff"><span style="color:#0066ff">闲</span>(6)&nbsp;<span style="color:#ff0000">庄</span>(6)</div>
<div class="cell" style="left:1156px;top:833px;width:106px;height:44px;background:#fff"><span style="color:#0066ff">50.00</span></div>
<div class="cell" style="left:1264px;top:833px;width:130px;height:44px;background:#fff">0.00</div>
<div class="cell" style="left:1396px;top:833px;width:114px;height:44px;background:#fff">0.00</div>
<div class="cell" style="left:1512px;top:833px;width:374px;height:44px;background:#fff">257.09/257.09</div>
<div class="cell" style="left:472px;top:833px;width:125px;height:44px;justify-content:flex-end">668233814</div>
<div class="a" style="left:600px;top:840px;width:29px;height:29px"><svg width="29" height="29" viewBox="0 0 29 29" style="opacity:.5"><rect x="0.5" y="0.5" width="28" height="28" rx="5" fill="#f0f0f0" stroke="#dedede"/><path d="M5.5 5.5 H18.5 L24.5 9.8 V24.5 H5.5 Z" fill="#f2f2f2" stroke="#999" stroke-width="1"/><path d="M18.5 5.5 V9.5 H24.5" fill="none" stroke="#999" stroke-width="1"/><path d="M8 11.8 L9.2 12 L9.2 13.8 L10.2 13.8 L10.2 11.3 L19 11.3 L19 17.5 L10.2 17.5 L10.2 15.6 L9.2 15.6 L9.2 17.4 L8 17.6 Z" fill="#8a8a8a"/><circle cx="19.8" cy="19.5" r="5.8" fill="#f2f2f2" stroke="#999" stroke-width="1"/><circle cx="17.4" cy="16.9" r="1.35" fill="#8a8a8a"/><circle cx="21.2" cy="16.4" r="1.35" fill="#8a8a8a"/><circle cx="23.1" cy="19.5" r="1.35" fill="#8a8a8a"/><circle cx="20.2" cy="22.3" r="1.35" fill="#8a8a8a"/><circle cx="16.9" cy="20.7" r="1.35" fill="#8a8a8a"/></svg></div>
<div class="cell" style="left:14px;top:879px;width:258px;height:43px;background:#fff">2025-12-10 05:43:32</div>
<div class="cell" style="left:274px;top:879px;width:196px;height:43px;background:#fff">523030345430</div>
<div class="cell" style="left:472px;top:879px;width:224px;height:43px;background:#fff"></div>
<div class="cell" style="left:698px;top:879px;width:94px;height:43px;background:#fff">10-36</div>
<div class="cell" style="left:794px;top:879px;width:129px;height:43px;background:#fff">百家乐</div>
<div class="cell" style="left:925px;top:879px;width:80px;height:43px;background:#fff">AS1</div>
<div class="cell" style="left:1007px;top:879px;width:147px;height:43px;background:#fff"><span style="color:#0066ff">闲</span>(2)&nbsp;<span style="color:#ff0000">庄</span>(7)</div>
<div class="cell" style="left:1156px;top:879px;width:106px;height:43px;background:#fff"><span style="color:#0066ff">50.00</span></div>
<div class="cell" style="left:1264px;top:879px;width:130px;height:43px;background:#fff">50.00</div>
<div class="cell" style="left:1396px;top:879px;width:114px;height:43px;background:#fff"><span style="color:#ff0000">-50.00</span></div>
<div class="cell" style="left:1512px;top:879px;width:374px;height:43px;background:#fff">307.09/257.09</div>
<div class="cell" style="left:472px;top:879px;width:125px;height:43px;justify-content:flex-end">668233721</div>
<div class="a" style="left:600px;top:886px;width:29px;height:29px"><svg width="29" height="29" viewBox="0 0 29 29" style="opacity:.5"><rect x="0.5" y="0.5" width="28" height="28" rx="5" fill="#f0f0f0" stroke="#dedede"/><path d="M5.5 5.5 H18.5 L24.5 9.8 V24.5 H5.5 Z" fill="#f2f2f2" stroke="#999" stroke-width="1"/><path d="M18.5 5.5 V9.5 H24.5" fill="none" stroke="#999" stroke-width="1"/><path d="M8 11.8 L9.2 12 L9.2 13.8 L10.2 13.8 L10.2 11.3 L19 11.3 L19 17.5 L10.2 17.5 L10.2 15.6 L9.2 15.6 L9.2 17.4 L8 17.6 Z" fill="#8a8a8a"/><circle cx="19.8" cy="19.5" r="5.8" fill="#f2f2f2" stroke="#999" stroke-width="1"/><circle cx="17.4" cy="16.9" r="1.35" fill="#8a8a8a"/><circle cx="21.2" cy="16.4" r="1.35" fill="#8a8a8a"/><circle cx="23.1" cy="19.5" r="1.35" fill="#8a8a8a"/><circle cx="20.2" cy="22.3" r="1.35" fill="#8a8a8a"/><circle cx="16.9" cy="20.7" r="1.35" fill="#8a8a8a"/></svg></div>
<div class="a" style="left:13px;top:922px;width:1873px;height:32px;background:#e2e2e2;border-radius:0"></div>
<div class="cell" style="left:14px;top:922px;width:258px;height:30px;background:#999;color:#fff;">小计</div>
<div class="cell" style="left:274px;top:922px;width:196px;height:30px;background:#999;color:#fff;">12</div>
<div class="cell" style="left:472px;top:922px;width:224px;height:30px;background:#999;color:#fff;"></div>
<div class="cell" style="left:698px;top:922px;width:94px;height:30px;background:#999;color:#fff;"></div>
<div class="cell" style="left:794px;top:922px;width:129px;height:30px;background:#999;color:#fff;"></div>
<div class="cell" style="left:925px;top:922px;width:80px;height:30px;background:#999;color:#fff;"></div>
<div class="cell" style="left:1007px;top:922px;width:147px;height:30px;background:#999;color:#fff;"></div>
<div class="cell" style="left:1156px;top:922px;width:106px;height:30px;background:#999;color:#fff;">652.00</div>
<div class="cell" style="left:1264px;top:922px;width:130px;height:30px;background:#999;color:#fff;">602.00</div>
<div class="cell" style="left:1396px;top:922px;width:114px;height:30px;background:#999;color:#fff;"><span style="color:#ff0000">-307.00</span></div>
<div class="cell" style="left:1512px;top:922px;width:374px;height:30px;background:#999;color:#fff;"></div>
<div class="a" style="left:13px;top:954px;width:1873px;height:30px;background:#e2e2e2;border-radius:0 0 3px 3px"></div>
<div class="cell" style="left:14px;top:954px;width:258px;height:30px;background:#999;color:#fff;border-radius:0 0 0 3px;">总计</div>
<div class="cell" style="left:274px;top:954px;width:196px;height:30px;background:#999;color:#fff;">12</div>
<div class="cell" style="left:472px;top:954px;width:224px;height:30px;background:#999;color:#fff;"></div>
<div class="cell" style="left:698px;top:954px;width:94px;height:30px;background:#999;color:#fff;"></div>
<div class="cell" style="left:794px;top:954px;width:129px;height:30px;background:#999;color:#fff;"></div>
<div class="cell" style="left:925px;top:954px;width:80px;height:30px;background:#999;color:#fff;"></div>
<div class="cell" style="left:1007px;top:954px;width:147px;height:30px;background:#999;color:#fff;"></div>
<div class="cell" style="left:1156px;top:954px;width:106px;height:30px;background:#999;color:#fff;">652.00</div>
<div class="cell" style="left:1264px;top:954px;width:130px;height:30px;background:#999;color:#fff;">602.00</div>
<div class="cell" style="left:1396px;top:954px;width:114px;height:30px;background:#999;color:#fff;"><span style="color:#ff0000">-307.00</span></div>
<div class="cell" style="left:1512px;top:954px;width:374px;height:30px;background:#999;color:#fff;border-radius:0 0 3px 0;"></div>
<div class="a" style="left:13px;top:381px;width:1px;height:541px;background:#ddd"></div>
<div class="a" style="left:1899px;top:151px;width:20px;height:863px;background:#f1f1f1"></div>
<div class="a" style="left:1901px;top:190px;width:17px;height:824px;background:#c1c1c1"></div>
<div class="a" style="left:1905px;top:160px;width:0;height:0;border-left:4.5px solid transparent;border-right:4.5px solid transparent;border-bottom:5px solid #505050"></div>
</body></html>
